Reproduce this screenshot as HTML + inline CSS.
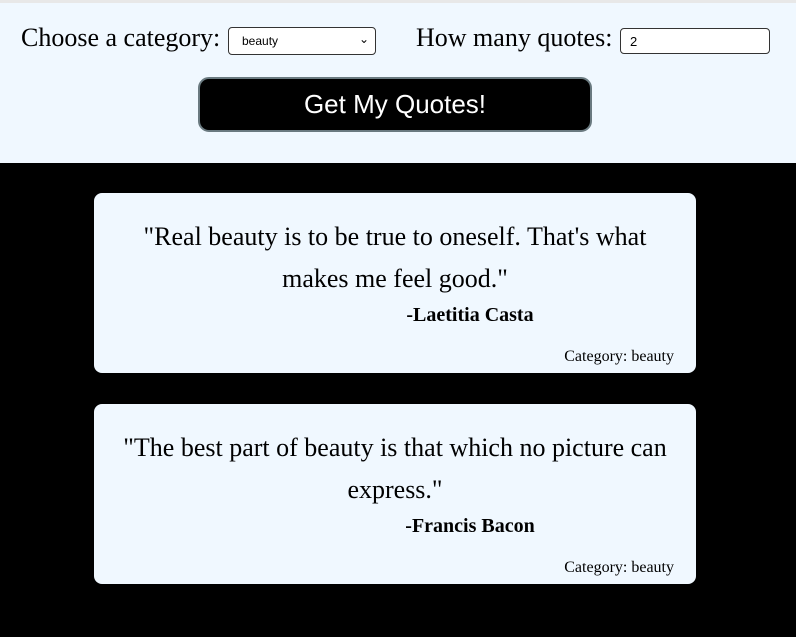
<!DOCTYPE html>
<html><head><style>
body{margin:0;width:796px;height:637px;background:#000;font-family:"Liberation Serif",serif;overflow:hidden}
.top{position:absolute;left:0;top:0;width:796px;height:163px;background:#f0f8ff;border-top:3px solid #e8e8e8;box-sizing:border-box}
.lbl{position:absolute;font-size:26px;top:20px;color:#000;white-space:nowrap}
.sel{position:absolute;left:228px;top:24px;width:148px;height:28px;border:1px solid #333;border-radius:4px;background:#fff;box-sizing:border-box;font-family:"Liberation Sans",sans-serif;font-size:12px;padding:6px 0 0 13px}
.sel span{position:absolute;right:6px;top:4px;font-size:12px}
.inp{position:absolute;left:620px;top:25px;width:150px;height:26px;border:1px solid #333;border-radius:4px;background:#fff;box-sizing:border-box;font-family:"Liberation Sans",sans-serif;font-size:13px;padding:5px 0 0 9px}
.btn{position:absolute;left:198px;top:74px;width:394px;height:55px;background:#000;border:2px solid #6a7a80;border-radius:11px;box-sizing:border-box;color:#fff;font-family:"Liberation Sans",sans-serif;font-size:26px;text-align:center;line-height:51px;box-shadow:inset 0 0 0 1px #000}
.card{position:absolute;left:94px;width:602px;height:180px;background:#f0f8ff;border-radius:8px}
.q{position:absolute;left:24px;right:24px;top:23px;text-align:center;font-size:26px;line-height:42px}
.a{position:absolute;left:0;right:0;text-align:center;font-weight:bold;font-size:20px;top:111px;padding-left:150px}
.c{position:absolute;right:22px;top:155px;font-size:16px}
</style></head><body>
<div class="top">
<div class="lbl" style="left:21px">Choose a category:</div>
<div class="sel">beauty<span>&#8964;</span></div>
<div class="lbl" style="left:416px">How many quotes:</div>
<div class="inp">2</div>
<div class="btn">Get My Quotes!</div>
</div>
<div class="card" style="top:193px">
<div class="q">"Real beauty is to be true to oneself. That's what<br>makes me feel good."</div>
<div class="a">-Laetitia Casta</div>
<div class="c">Category: beauty</div>
</div>
<div class="card" style="top:404px">
<div class="q">"The best part of beauty is that which no picture can express."</div>
<div class="a">-Francis Bacon</div>
<div class="c">Category: beauty</div>
</div>
</body></html>
